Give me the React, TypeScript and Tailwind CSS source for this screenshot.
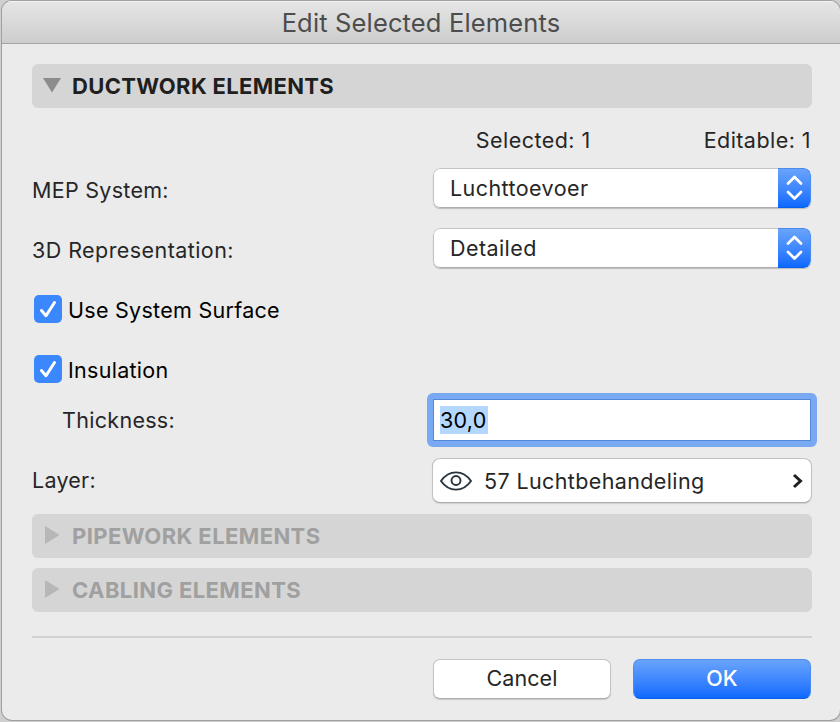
import type { ReactNode } from "react"

function SectionHeader({ title, open = false }: { title: ReactNode; open?: boolean }) {
    return (
        <div className="flex h-11 items-center rounded-[6px] bg-[#d5d5d5] pl-[11px]">
            <svg width="18" height="18" viewBox="0 0 18 18" className={open ? "-mt-0.5 text-[#8c8c8c]" : "-mt-0.5 text-[#b7b7b7]"}>
                {open ? <path d="M0 2h18L9 16.500z" fill="currentColor" /> : <path d="M2 0v18l14.500-9z" fill="currentColor" />}
            </svg>
            <h2 className={`ml-[11px] text-[22px] leading-[44px] font-bold ${open ? "tracking-[0.32px] text-[#1f1f1f]" : "tracking-[0.4px] text-[#a0a0a0]"}`}>{title}</h2>
        </div>
    )
}

function Select({ children }: { children: ReactNode }) {
    return (
        <button className="flex h-10 w-[378px] overflow-hidden rounded-[7px] bg-white text-left tracking-[0.42px] shadow-[0_1px_1px_rgba(0,0,0,0.2)]">
            <span className="h-10 flex-1 rounded-l-[7px] border border-r-0 border-[#c3c3c3] border-b-[#adadad] pl-4 leading-[38px]">{children}</span>
            <span className="h-10 w-[33px] rounded-r-[7px] border border-l-0 border-[#4a8cf0] border-b-[#0a60ea] bg-linear-to-b from-[#6ba5fb] to-[#0567ff] bg-origin-border">
                <svg width="32" height="38" viewBox="0 0 32 38" fill="none" stroke="white" strokeWidth="2.700" strokeLinecap="round" strokeLinejoin="round">
                    <path d="M10 14.500l6.500-6.500 6.500 6.500M10 23l6.500 6.500 6.500-6.500" />
                </svg>
            </span>
        </button>
    )
}

function Checkbox({ children }: { children: ReactNode }) {
    return (
        <label className="flex h-7 text-black">
            <span className="ml-0.5 h-7 w-7 rounded-[5px] bg-[#3b87fd]">
                <svg width="28" height="28" viewBox="0 0 28 28" fill="none" stroke="white" strokeWidth="3" strokeLinecap="round" strokeLinejoin="round">
                    <path d="M7.500 15.500l4.500 5.200 8.500-13.200" />
                </svg>
            </span>
            <span className="ml-1.5 leading-[30px] tracking-[0.28px]">{children}</span>
        </label>
    )
}

export default function App() {
    return (
        <div className="h-[722px] w-[840px] overflow-hidden bg-[#cfcfcf] pt-px pl-0.5 font-['Inter',sans-serif] text-[21.5px] whitespace-nowrap text-[#262626]">
            <div className="h-[719px] w-[838px] overflow-hidden rounded-[10px] bg-[#ebebeb] shadow-[0_0_0_1px_#a0a0a0]">
                <header className="h-[43px] border-b border-[#a5a5a5] bg-linear-to-b from-[#e6e6e6] to-[#cdcdcd] text-center text-[25.5px] leading-[44px] tracking-[0.15px] text-[#4d4d4d] shadow-[inset_0_1px_0_#f4f4f4]">
                    <span>Edit Selected Elements</span>
                </header>
                <main className="mt-5 ml-[30px] w-[780px]">
                    <SectionHeader open title="DUCTWORK ELEMENTS" />
                    <div className="mt-[17px] flex h-[30px] justify-end gap-[113px] pr-px leading-[30px] tracking-[0.45px]">
                        <span>Selected: 1</span>
                        <span>Editable: 1</span>
                    </div>
                    <div className="mt-[13px] flex h-10 justify-between pr-px">
                        <span className="leading-[44px] tracking-[0.28px]">MEP System:</span>
                        <Select>Luchttoevoer</Select>
                    </div>
                    <div className="mt-5 flex h-10 justify-between pr-px">
                        <span className="leading-[44px] tracking-[0.43px]">3D Representation:</span>
                        <Select>Detailed</Select>
                    </div>
                    <div className="mt-[27px] flex flex-col gap-8">
                        <Checkbox>Use System Surface</Checkbox>
                        <Checkbox>Insulation</Checkbox>
                    </div>
                    <div className="mt-2.5 -mr-[5px] flex justify-between">
                        <span className="ml-[30px] leading-[54px] tracking-[0.3px]">Thickness:</span>
                        <div className="h-[54px] w-[390px] rounded-[6px] bg-[#78a9f2] p-1.5">
                            <div className="h-[42px] border border-[#5688da] bg-white pt-1.5 pl-1.5 text-black">
                                <span className="block h-7 w-12 bg-[#b3d7ff] leading-7 tracking-[0.25px]">30,0</span>
                            </div>
                        </div>
                    </div>
                    <div className="mt-[11px] flex h-[45px] justify-between">
                        <span className="leading-[44px] tracking-[0.25px]">Layer:</span>
                        <button className="flex h-[45px] w-[380px] items-center rounded-[8px] border border-[#c2c2c2] border-b-[#adadad] bg-white px-[7px] shadow-[0_1px_1px_rgba(0,0,0,0.12)]">
                            <svg width="32" height="20" viewBox="0 0 32 20" fill="none" stroke="#27333d" strokeWidth="1.900" strokeLinejoin="round">
                                <path d="M1 10C9-1.500 23-1.500 31 10C23 21.500 9 21.500 1 10z" />
                                <circle cx="16" cy="9.500" r="4.500" />
                            </svg>
                            <span className="ml-3 pt-0.5 tracking-[0.38px]">57 Luchtbehandeling</span>
                            <svg className="ml-auto" width="12" height="18" viewBox="0 0 12 18" fill="none" stroke="#202020" strokeWidth="3">
                                <path d="M2 3l6.500 6-6.500 6" />
                            </svg>
                        </button>
                    </div>
                    <div className="mt-[11px] flex flex-col gap-2.5">
                        <SectionHeader title="PIPEWORK ELEMENTS" />
                        <SectionHeader title="CABLING ELEMENTS" />
                    </div>
                    <footer className="mt-6 flex justify-end gap-[22px] border-t-2 border-[#d2d2d2] pt-[21px] pr-px">
                        <button className="h-10 w-[178px] rounded-[7px] border border-[#c3c3c3] border-b-[#adadad] bg-white pb-0.5 leading-[36px] tracking-[0.1px] shadow-[0_1px_1px_rgba(0,0,0,0.15)]">Cancel</button>
                        <button className="h-10 w-[178px] rounded-[7px] border border-[#4a8cf0] border-b-[#0a60ea] bg-linear-to-b from-[#6ba5fb] to-[#0567ff] bg-origin-border pb-0.5 leading-[36px] font-medium text-white">OK</button>
                    </footer>
                </main>
            </div>
        </div>
    )
}
